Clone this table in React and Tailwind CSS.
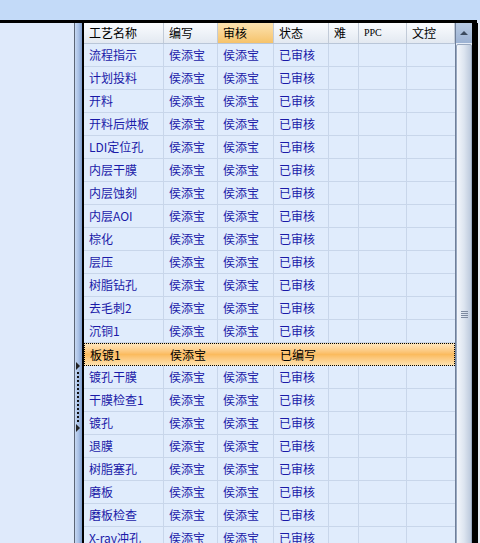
import React from "react";

const rows = [
  ["流程指示", "侯添宝", "侯添宝", "已审核"],
  ["计划投料", "侯添宝", "侯添宝", "已审核"],
  ["开料", "侯添宝", "侯添宝", "已审核"],
  ["开料后烘板", "侯添宝", "侯添宝", "已审核"],
  ["LDI定位孔", "侯添宝", "侯添宝", "已审核"],
  ["内层干膜", "侯添宝", "侯添宝", "已审核"],
  ["内层蚀刻", "侯添宝", "侯添宝", "已审核"],
  ["内层AOI", "侯添宝", "侯添宝", "已审核"],
  ["棕化", "侯添宝", "侯添宝", "已审核"],
  ["层压", "侯添宝", "侯添宝", "已审核"],
  ["树脂钻孔", "侯添宝", "侯添宝", "已审核"],
  ["去毛刺2", "侯添宝", "侯添宝", "已审核"],
  ["沉铜1", "侯添宝", "侯添宝", "已审核"],
  ["板镀1", "侯添宝", "", "已编写"],
  ["镀孔干膜", "侯添宝", "侯添宝", "已审核"],
  ["干膜检查1", "侯添宝", "侯添宝", "已审核"],
  ["镀孔", "侯添宝", "侯添宝", "已审核"],
  ["退膜", "侯添宝", "侯添宝", "已审核"],
  ["树脂塞孔", "侯添宝", "侯添宝", "已审核"],
  ["磨板", "侯添宝", "侯添宝", "已审核"],
  ["磨板检查", "侯添宝", "侯添宝", "已审核"],
  ["X-ray冲孔", "侯添宝", "侯添宝", "已审核"],
];

const widths = ["w-[80px]", "w-[54px]", "w-[56px]", "w-[55px]", "w-[30px]", "w-[48px]", "w-[48px]"];

const Cell = ({ w, children, last }) => (
  <div
    className={`${w} shrink-0 h-full flex items-center pl-[5px] overflow-hidden whitespace-nowrap ${
      last ? "" : "border-r border-[#c8d6ea]"
    }`}
  >
    {children}
  </div>
);

const App = () => {
  const font = { fontFamily: '"Noto Sans CJK SC", "Noto Sans", sans-serif' };
  return (
    <div
      className="w-[480px] h-[543px] overflow-hidden flex flex-col bg-[#dfeafb] text-[12px] leading-none"
      style={font}
    >
      <div className="h-[20px] bg-[#c3daf8] shrink-0" />
      <div className="h-[3px] bg-black shrink-0 mr-[3px]" />
      <div className="flex flex-1 min-h-0">
        {/* left panel */}
        <div className="w-[75px] shrink-0 bg-[#dfeafb] border-r border-[#5c6677]" />
        {/* splitter */}
        <div className="w-[7px] shrink-0 bg-gradient-to-r from-[#c6d8f2] via-[#a9c1e6] to-[#7f9dcd] flex flex-col">
          <div className="h-[339px]" />
          <div className="flex flex-col items-start">
            <div className="w-0 h-0 border-y-[4px] border-y-transparent border-l-[4px] border-l-[#222] ml-[1px]" />
            <div className="h-[50px] w-[2px] ml-[2px] my-[2px] border-l-2 border-dotted border-[#111]" />
            <div className="w-0 h-0 border-y-[4px] border-y-transparent border-l-[4px] border-l-[#222] ml-[1px]" />
          </div>
        </div>
        <div className="w-[2px] shrink-0 bg-black" />
        {/* grid */}
        <div className="w-[371px] shrink-0 flex flex-col bg-[#e0ecfc]">
          <div className="h-[21px] shrink-0 flex border-b border-[#b9c6d8] bg-gradient-to-b from-[#fafcff] to-[#e3e9f1] text-black">
            {["工艺名称", "编写", "审核", "状态", "难", "PPC", "文控"].map((h, i) => (
              <div
                key={h}
                className={`${widths[i]} shrink-0 h-full flex items-center pl-[5px] border-r border-[#c2cbd8] ${
                  i === 2 ? "bg-gradient-to-b from-[#fce3b0] to-[#f6c36a]" : ""
                } ${i === 5 ? "text-[10px] font-['Liberation_Serif',serif]" : ""}`}
              >
                {h}
              </div>
            ))}
          </div>
          {rows.map((r, idx) => {
            const sel = idx === 13;
            return (
              <div
                key={idx}
                className={`h-[23px] shrink-0 flex ${
                  sel
                    ? "border border-dotted border-black bg-gradient-to-b from-[#fee6bd] via-[#fbbb5e] to-[#fde1ad] text-black"
                    : "border-b border-[#c8d6ea] text-[#1a1aa8]"
                }`}
              >
                {r.map((c, i) => (
                  <Cell key={i} w={widths[i]} last={sel}>
                    {c}
                  </Cell>
                ))}
                <Cell w={widths[4]} last={sel} />
                <Cell w={widths[5]} last={sel} />
                <Cell w={widths[6]} last />
              </div>
            );
          })}
        </div>
        {/* scrollbar */}
        <div className="w-[17px] shrink-0 flex flex-col bg-[#e6edf7] border-l border-[#6f7f99]">
          <div className="h-[20px] shrink-0 bg-gradient-to-b from-[#b8cae3] to-[#9cb2d3] flex items-center justify-center">
            <div className="w-0 h-0 border-x-[4px] border-x-transparent border-b-[4px] border-b-[#3c4a5e]" />
          </div>
          <div className="h-[540px] shrink-0 mt-[1px] rounded-[2px] border border-[#98a8c0] bg-gradient-to-r from-[#f3f6fb] via-[#dde5f0] to-[#bcc9dc] flex items-center justify-center">
            <div className="flex flex-col gap-[1px] w-[7px]">
              <div className="h-[1px] bg-[#7d8aa0]" />
              <div className="h-[1px] bg-[#7d8aa0]" />
              <div className="h-[1px] bg-[#7d8aa0]" />
              <div className="h-[1px] bg-[#7d8aa0]" />
            </div>
          </div>
        </div>
        <div className="w-[6px] shrink-0 bg-black" />
        <div className="flex-1 bg-[#e8eef6]" />
      </div>
    </div>
  );
};

export default App;
